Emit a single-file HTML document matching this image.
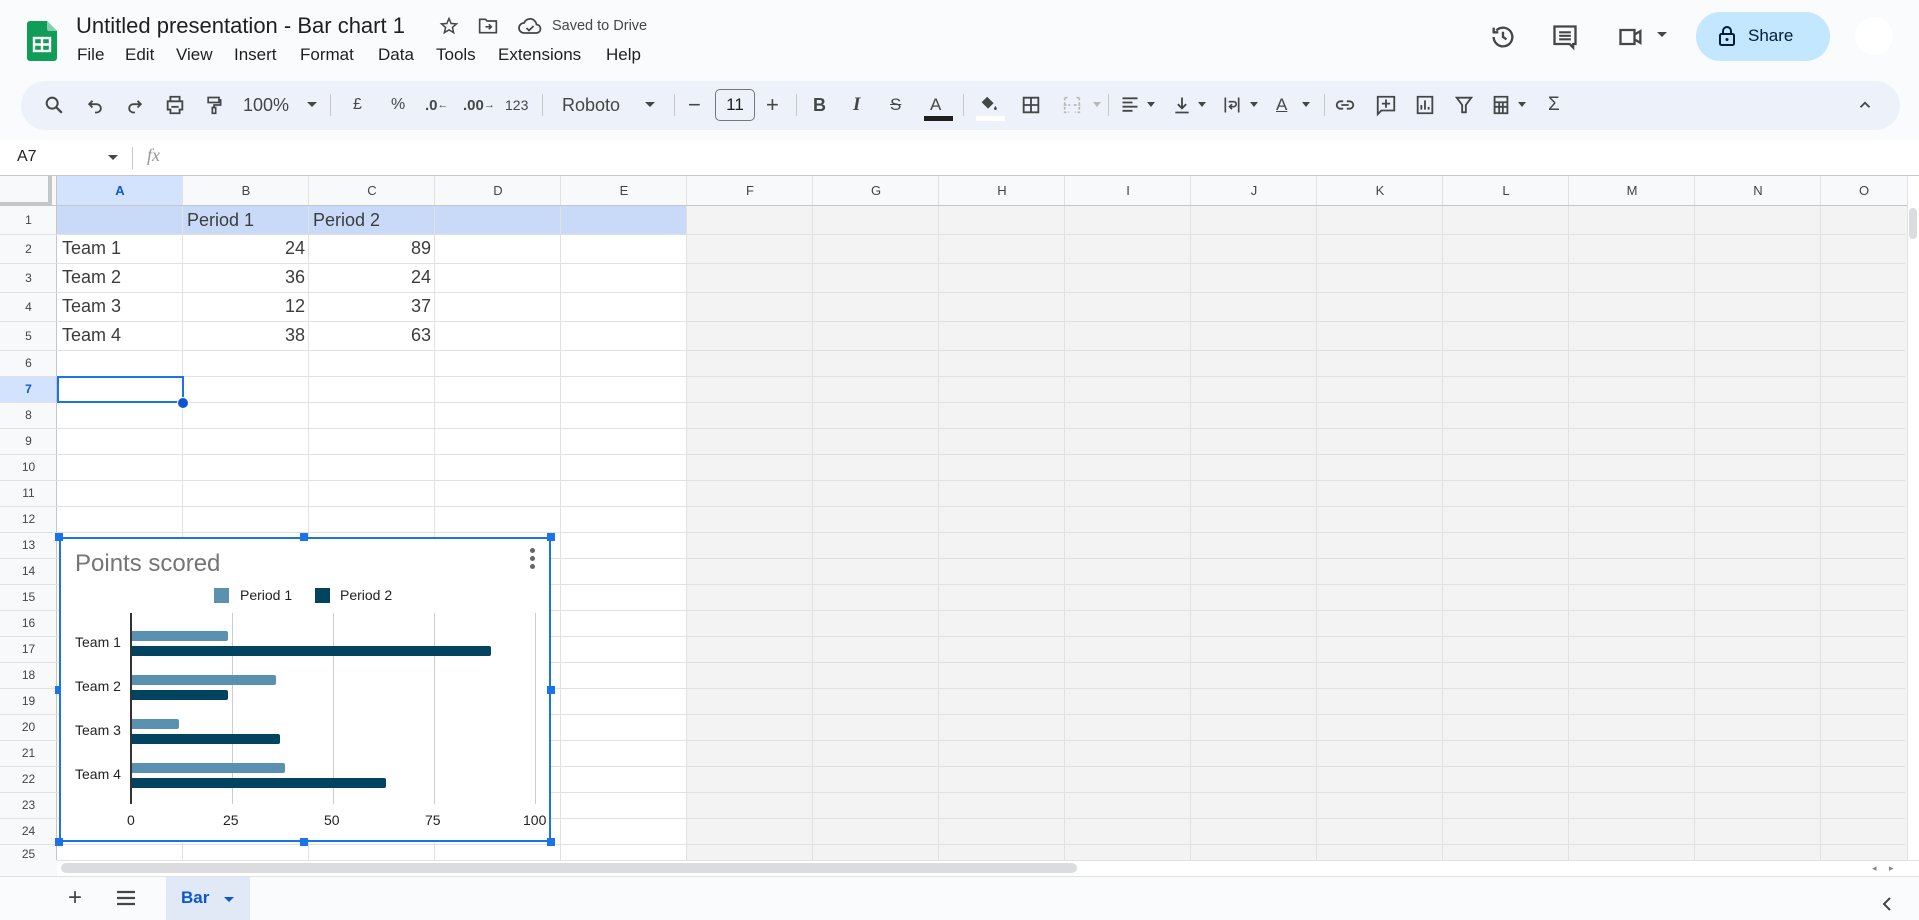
<!DOCTYPE html>
<html><head><meta charset="utf-8"><style>
*{box-sizing:border-box;margin:0;padding:0}
body{width:1919px;height:920px;overflow:hidden;background:#f9fbfd;font-family:"Liberation Sans",Arial,sans-serif;position:relative;color:#1f1f1f}
.a{position:absolute}
.menu span{position:absolute;top:45px;font-size:17px;color:#1f1f1f}
.tb{position:absolute;top:93px;height:24px;display:flex;align-items:center;justify-content:center;color:#444746;font-size:16px}
.sep{position:absolute;top:94px;width:1px;height:22px;background:#c7c7c7}
.ch{position:absolute;top:176px;height:30px;line-height:30px;text-align:center;font-size:13px;color:#444;width:126px}
.rh{position:absolute;left:0;width:57px;text-align:center;font-size:12px;color:#444;display:flex;align-items:center;justify-content:center}
.hl{position:absolute;left:0;width:1905px;height:1px;background:#e1e1e1}
.cell{position:absolute;font-size:18px;color:#3c3c3c;display:flex;align-items:center}
.num{justify-content:flex-end;width:126px;padding-right:4px}
.h{position:absolute;width:8px;height:8px;background:#1a73e8}
.bar{position:absolute;height:10px;border-radius:0 2px 2px 0}
.p1{background:#5b91b0}.p2{background:#024460}
.lab{position:absolute;font-size:14px;color:#222}
</style></head><body>

<!-- logo -->
<svg class="a" style="left:27px;top:21px" width="30" height="40" viewBox="0 0 30 40"><path d="M3 0h17l10 10v27a3 3 0 0 1-3 3H3a3 3 0 0 1-3-3V3a3 3 0 0 1 3-3z" fill="#0f9d58"/><path d="M20 0l10 10H22a2 2 0 0 1-2-2z" fill="#87ceac"/><rect x="7" y="17" width="16" height="13" fill="none" stroke="#fff" stroke-width="2.4"/><path d="M7 23.5h16M15 17v13" stroke="#fff" stroke-width="2.4"/></svg>
<div class="a" style="left:76px;top:13px;font-size:22px;color:#1f1f1f">Untitled presentation - Bar chart 1</div>
<svg class="a" style="left:439px;top:16px" width="20" height="20" viewBox="0 0 24 24"><path d="M12 3l2.6 6 6.4.5-4.9 4.2 1.5 6.3L12 16.6 6.4 20l1.5-6.3L3 9.5 9.4 9z" fill="none" stroke="#444746" stroke-width="1.8"/></svg>
<svg class="a" style="left:478px;top:17px" width="20" height="18" viewBox="0 0 24 20"><path d="M2 2h7l2 2h11v14H2z" fill="none" stroke="#444746" stroke-width="2"/><path d="M9 11h7M13 8l3 3-3 3" fill="none" stroke="#444746" stroke-width="2"/></svg>
<svg class="a" style="left:518px;top:17px" width="24" height="18" viewBox="0 0 24 18"><path d="M6 16a5 5 0 0 1 0-10 6.5 6.5 0 0 1 12.5 1.5A4 4 0 0 1 18 16z" fill="none" stroke="#444746" stroke-width="1.8"/><path d="M8.5 11l2.5 2.5 4.5-4.5" fill="none" stroke="#444746" stroke-width="1.8"/></svg>
<div class="a" style="left:552px;top:18px;font-size:14.5px;color:#444746">Saved to Drive</div>
<div class="menu"><span style="left:77px">File</span><span style="left:125px">Edit</span><span style="left:176px">View</span><span style="left:234px">Insert</span><span style="left:300px">Format</span><span style="left:378px">Data</span><span style="left:436px">Tools</span><span style="left:498px">Extensions</span><span style="left:606px">Help</span></div>

<!-- right header -->
<svg class="a" style="left:1489px;top:23px" width="28" height="28" viewBox="0 0 24 24"><path d="M4 12a8 8 0 1 0 2.3-5.6M4 4v4h4" fill="none" stroke="#444746" stroke-width="2"/><path d="M12 7.5V12l3 2" fill="none" stroke="#444746" stroke-width="2"/></svg>
<svg class="a" style="left:1551px;top:23px" width="28" height="28" viewBox="0 0 24 24"><path d="M3 3h18v15h-2v3l-3-3H3z" fill="none" stroke="#444746" stroke-width="2"/><path d="M7 8h10M7 11h10M7 14h10" stroke="#444746" stroke-width="1.8"/></svg>
<svg class="a" style="left:1617px;top:25px" width="28" height="24" viewBox="0 0 24 20"><path d="M3 4h12v12H3zM15 8l5-3v10l-5-3" fill="none" stroke="#444746" stroke-width="2"/></svg>
<div class="a" style="left:1657px;top:32px;border-left:5px solid transparent;border-right:5px solid transparent;border-top:5px solid #444746"></div>
<div class="a" style="left:1696px;top:12px;width:134px;height:49px;border-radius:25px;background:#c2e7ff"></div>
<svg class="a" style="left:1718px;top:25px" width="18" height="22" viewBox="0 0 18 22"><rect x="2" y="9" width="14" height="11" rx="1.5" fill="none" stroke="#001d35" stroke-width="2"/><path d="M5 9V6a4 4 0 0 1 8 0v3" fill="none" stroke="#001d35" stroke-width="2"/><circle cx="9" cy="14.5" r="1.5" fill="#001d35"/></svg>
<div class="a" style="left:1748px;top:26px;font-size:17px;color:#001d35;font-weight:500">Share</div>
<div class="a" style="left:1855px;top:17px;width:38px;height:38px;border-radius:50%;background:#fff"></div>

<!-- toolbar -->
<div class="a" style="left:21px;top:81px;width:1879px;height:49px;border-radius:25px;background:#edf2fa"></div>
<svg class="tb" style="left:43px;width:22px" viewBox="0 0 24 24"><circle cx="10" cy="10" r="6" fill="none" stroke="#444746" stroke-width="2.2"/><path d="M14.5 14.5l6 6" stroke="#444746" stroke-width="2.4"/></svg>
<svg class="tb" style="left:85px;width:20px" viewBox="0 0 24 24"><path d="M9 7L5 11l4 4M5 11h9a5 5 0 0 1 0 10h-2" fill="none" stroke="#444746" stroke-width="2.2"/></svg>
<svg class="tb" style="left:125px;width:20px" viewBox="0 0 24 24"><path d="M15 7l4 4-4 4M19 11h-9a5 5 0 0 0 0 10h2" fill="none" stroke="#444746" stroke-width="2.2"/></svg>
<svg class="tb" style="left:164px;width:22px" viewBox="0 0 24 24"><path d="M7 8V3h10v5M4 8h16v9h-3v4H7v-4H4z" fill="none" stroke="#444746" stroke-width="2"/><path d="M8 14h8" stroke="#444746" stroke-width="2"/></svg>
<svg class="tb" style="left:204px;width:20px" viewBox="0 0 24 24"><path d="M5 3h13v6H5zM18 6h2v6h-8v3M10 15h4v7h-4z" fill="none" stroke="#444746" stroke-width="2"/></svg>
<div class="tb" style="left:243px;font-size:18px">100%</div>
<div class="a" style="left:307px;top:102px;border-left:5px solid transparent;border-right:5px solid transparent;border-top:5px solid #444746"></div>
<div class="sep" style="left:330px"></div>
<div class="tb" style="left:353px;font-size:16px">£</div>
<div class="tb" style="left:391px;font-size:16px">%</div>
<div class="tb" style="left:425px;font-size:15px;font-weight:bold">.0<span style="font-size:11px;font-weight:normal">←</span></div>
<div class="tb" style="left:463px;font-size:15px;font-weight:bold">.00<span style="font-size:11px;font-weight:normal">→</span></div>
<div class="tb" style="left:505px;font-size:14px">123</div>
<div class="sep" style="left:542px"></div>
<div class="tb" style="left:562px;font-size:18px">Roboto</div>
<div class="a" style="left:645px;top:102px;border-left:5px solid transparent;border-right:5px solid transparent;border-top:5px solid #444746"></div>
<div class="sep" style="left:674px"></div>
<div class="tb" style="left:688px;font-size:22px">−</div>
<div class="a" style="left:715px;top:89px;width:40px;height:32px;border:1.5px solid #747775;border-radius:5px;text-align:center;line-height:29px;font-size:17px;color:#1f1f1f">11</div>
<div class="tb" style="left:766px;font-size:22px">+</div>
<div class="sep" style="left:796px"></div>
<div class="tb" style="left:813px;font-size:18px;font-weight:bold">B</div>
<div class="tb" style="left:853px;font-size:19px;font-style:italic;font-weight:bold;font-family:'Liberation Serif',serif">I</div>
<div class="tb" style="left:890px;font-size:17px;text-decoration:line-through">S</div>
<div class="tb" style="left:930px;font-size:17px">A</div>
<div class="a" style="left:924px;top:116px;width:29px;height:5px;background:#1f1f1f"></div>
<div class="sep" style="left:963px"></div>
<svg class="tb" style="left:978px;width:22px" viewBox="0 0 24 24"><path d="M10 3l7 7-6 6-7-7z" fill="#444746"/><path d="M19 13c1 1.5 1.5 2.5 1.5 3a1.5 1.5 0 0 1-3 0c0-.5.5-1.5 1.5-3z" fill="#444746"/></svg>
<div class="a" style="left:976px;top:116px;width:29px;height:5px;background:#fff"></div>
<svg class="tb" style="left:1020px;width:22px" viewBox="0 0 24 24"><path d="M4 4h16v16H4zM12 4v16M4 12h16" fill="none" stroke="#444746" stroke-width="2"/></svg>
<svg class="tb" style="left:1061px;width:22px" viewBox="0 0 24 24"><path d="M4 4h5M4 4v16h5M20 4h-5M20 4v16h-5M3 12h7M14 12h7" fill="none" stroke="#b8b8b8" stroke-width="1.8" stroke-dasharray="3 2"/></svg>
<div class="a" style="left:1093px;top:102px;border-left:4px solid transparent;border-right:4px solid transparent;border-top:5px solid #b8b8b8"></div>
<div class="sep" style="left:1108px"></div>
<svg class="tb" style="left:1120px;width:20px" viewBox="0 0 24 24"><path d="M3 4h18M3 9h12M3 14h18M3 19h12" stroke="#444746" stroke-width="2.2"/></svg>
<div class="a" style="left:1147px;top:102px;border-left:4px solid transparent;border-right:4px solid transparent;border-top:5px solid #444746"></div>
<svg class="tb" style="left:1172px;width:20px" viewBox="0 0 24 24"><path d="M12 3v13M7 11l5 5 5-5M4 21h16" fill="none" stroke="#444746" stroke-width="2.2"/></svg>
<div class="a" style="left:1198px;top:102px;border-left:4px solid transparent;border-right:4px solid transparent;border-top:5px solid #444746"></div>
<svg class="tb" style="left:1222px;width:20px" viewBox="0 0 24 24"><path d="M4 3v18M20 3v18M8 8h6a3 3 0 0 1 0 6h-4M12 11l-3 3 3 3" fill="none" stroke="#444746" stroke-width="2"/></svg>
<div class="a" style="left:1250px;top:102px;border-left:4px solid transparent;border-right:4px solid transparent;border-top:5px solid #444746"></div>
<div class="tb" style="left:1276px;font-size:17px;text-decoration:underline">A</div>
<div class="a" style="left:1302px;top:102px;border-left:4px solid transparent;border-right:4px solid transparent;border-top:5px solid #444746"></div>
<div class="sep" style="left:1324px"></div>
<svg class="tb" style="left:1334px;width:22px" viewBox="0 0 24 24"><path d="M10 8H7a4 4 0 0 0 0 8h3M14 8h3a4 4 0 0 1 0 8h-3M8 12h8" fill="none" stroke="#444746" stroke-width="2"/></svg>
<svg class="tb" style="left:1375px;width:22px" viewBox="0 0 24 24"><path d="M3 3h18v15H7l-4 4z" fill="none" stroke="#444746" stroke-width="2"/><path d="M12 6v9M7.5 10.5h9" stroke="#444746" stroke-width="2"/></svg>
<svg class="tb" style="left:1414px;width:22px" viewBox="0 0 24 24"><path d="M4 3h16v18H4z" fill="none" stroke="#444746" stroke-width="2"/><path d="M8 17v-5M12 17V7M16 17v-3" stroke="#444746" stroke-width="2"/></svg>
<svg class="tb" style="left:1453px;width:22px" viewBox="0 0 24 24"><path d="M4 4h16l-6 8v8h-4v-8z" fill="none" stroke="#444746" stroke-width="2"/></svg>
<svg class="tb" style="left:1490px;width:22px" viewBox="0 0 24 24"><path d="M5 3h14v18H5zM5 9h14M5 14h14M10 9v12M14 9v12" fill="none" stroke="#444746" stroke-width="2"/></svg>
<div class="a" style="left:1518px;top:102px;border-left:4px solid transparent;border-right:4px solid transparent;border-top:5px solid #444746"></div>
<div class="tb" style="left:1548px;font-size:19px">Σ</div>
<svg class="tb" style="left:1856px;width:18px" viewBox="0 0 24 24"><path d="M6 15l6-6 6 6" fill="none" stroke="#444746" stroke-width="2.4"/></svg>

<!-- formula bar -->
<div class="a" style="left:0;top:140px;width:1919px;height:36px;background:#fff;border-bottom:1px solid #c7c7c7"></div>
<div class="a" style="left:17px;top:148px;font-size:16px;color:#1f1f1f">A7</div>
<div class="a" style="left:108px;top:155px;border-left:5px solid transparent;border-right:5px solid transparent;border-top:5px solid #444746"></div>
<div class="a" style="left:132px;top:147px;width:1px;height:22px;background:#c7c7c7"></div>
<div class="a" style="left:147px;top:145px;font-size:18px;color:#999;font-style:italic;font-family:'Liberation Serif',serif">fx</div>

<!-- grid bg -->
<div class="a" style="left:57px;top:206px;width:630px;height:654px;background:#fff"></div>
<div class="a" style="left:687px;top:206px;width:1220px;height:654px;background:#f3f3f3"></div>
<div class="a" style="left:57px;top:206px;width:630px;height:28px;background:#c9daf8"></div>
<div class="a" style="left:0;top:176px;width:1907px;height:30px;background:#f8f9fa"></div>
<div class="a" style="left:0;top:206px;width:57px;height:654px;background:#f8f9fa"></div>
<div class="a" style="left:57px;top:176px;width:126px;height:30px;background:#d3e3fd"></div>
<div class="a" style="left:0;top:376px;width:57px;height:26px;background:#d3e3fd"></div>
<!-- vertical lines -->
<div class="a" style="left:57px;top:176px;width:1850px;height:684px;background:repeating-linear-gradient(to right,transparent 0,transparent 125px,#e1e1e1 125px,#e1e1e1 126px)"></div>
<div class="a" style="left:0;top:176px;width:52px;height:30px;border-right:4px solid #c4c7c5;border-bottom:4px solid #c4c7c5;background:#f8f9fa"></div>
<div class="a" style="left:56px;top:176px;width:1px;height:684px;background:#c4c7c5"></div>
<div class="a" style="left:0;top:205px;width:1907px;height:1px;background:#c4c7c5"></div>
<!-- horizontal lines -->
<div class="hl" style="top:234px"></div><div class="hl" style="top:263px"></div><div class="hl" style="top:292px"></div><div class="hl" style="top:321px"></div><div class="hl" style="top:350px"></div><div class="hl" style="top:376px"></div><div class="hl" style="top:402px"></div><div class="hl" style="top:428px"></div><div class="hl" style="top:454px"></div><div class="hl" style="top:480px"></div><div class="hl" style="top:506px"></div><div class="hl" style="top:532px"></div><div class="hl" style="top:558px"></div><div class="hl" style="top:584px"></div><div class="hl" style="top:610px"></div><div class="hl" style="top:636px"></div><div class="hl" style="top:662px"></div><div class="hl" style="top:688px"></div><div class="hl" style="top:714px"></div><div class="hl" style="top:740px"></div><div class="hl" style="top:766px"></div><div class="hl" style="top:792px"></div><div class="hl" style="top:818px"></div><div class="hl" style="top:844px"></div>

<!-- column headers -->
<div class="ch" style="left:57px;font-weight:bold;color:#0b57d0">A</div><div class="ch" style="left:183px">B</div><div class="ch" style="left:309px">C</div><div class="ch" style="left:435px">D</div><div class="ch" style="left:561px">E</div><div class="ch" style="left:687px">F</div><div class="ch" style="left:813px">G</div><div class="ch" style="left:939px">H</div><div class="ch" style="left:1065px">I</div><div class="ch" style="left:1191px">J</div><div class="ch" style="left:1317px">K</div><div class="ch" style="left:1443px">L</div><div class="ch" style="left:1569px">M</div><div class="ch" style="left:1695px">N</div><div class="ch" style="left:1821px;width:86px">O</div>

<!-- row headers -->
<div class="rh" style="top:206px;height:28px">1</div><div class="rh" style="top:234px;height:29px">2</div><div class="rh" style="top:263px;height:29px">3</div><div class="rh" style="top:292px;height:29px">4</div><div class="rh" style="top:321px;height:29px">5</div><div class="rh" style="top:350px;height:26px">6</div><div class="rh" style="top:376px;height:26px;font-weight:bold;color:#0b57d0">7</div><div class="rh" style="top:402px;height:26px">8</div><div class="rh" style="top:428px;height:26px">9</div><div class="rh" style="top:454px;height:26px">10</div><div class="rh" style="top:480px;height:26px">11</div><div class="rh" style="top:506px;height:26px">12</div><div class="rh" style="top:532px;height:26px">13</div><div class="rh" style="top:558px;height:26px">14</div><div class="rh" style="top:584px;height:26px">15</div><div class="rh" style="top:610px;height:26px">16</div><div class="rh" style="top:636px;height:26px">17</div><div class="rh" style="top:662px;height:26px">18</div><div class="rh" style="top:688px;height:26px">19</div><div class="rh" style="top:714px;height:26px">20</div><div class="rh" style="top:740px;height:26px">21</div><div class="rh" style="top:766px;height:26px">22</div><div class="rh" style="top:792px;height:26px">23</div><div class="rh" style="top:818px;height:26px">24</div><div class="rh" style="top:844px;height:16px;overflow:hidden;align-items:flex-start;padding-top:3px">25</div>

<!-- cells -->
<div class="cell" style="left:187px;top:206px;height:28px">Period 1</div>
<div class="cell" style="left:313px;top:206px;height:28px">Period 2</div>
<div class="cell" style="left:62px;top:234px;height:29px">Team 1</div>
<div class="cell" style="left:62px;top:263px;height:29px">Team 2</div>
<div class="cell" style="left:62px;top:292px;height:29px">Team 3</div>
<div class="cell" style="left:62px;top:321px;height:29px">Team 4</div>
<div class="cell num" style="left:183px;top:234px;height:29px">24</div><div class="cell num" style="left:309px;top:234px;height:29px">89</div>
<div class="cell num" style="left:183px;top:263px;height:29px">36</div><div class="cell num" style="left:309px;top:263px;height:29px">24</div>
<div class="cell num" style="left:183px;top:292px;height:29px">12</div><div class="cell num" style="left:309px;top:292px;height:29px">37</div>
<div class="cell num" style="left:183px;top:321px;height:29px">38</div><div class="cell num" style="left:309px;top:321px;height:29px">63</div>

<!-- selection -->
<div class="a" style="left:57px;top:376px;width:127px;height:27px;border:2px solid #1a73e8"></div>
<div class="a" style="left:177px;top:397px;width:12px;height:12px;border-radius:50%;background:#0b57d0;border:1.5px solid #fff"></div>

<!-- chart -->
<div class="a" style="left:59px;top:537px;width:492px;height:305px;background:#fff;border:2px solid #1a73e8"></div>
<div class="a" style="left:75px;top:550px;font-size:24px;color:#757575">Points scored</div>
<div class="a" style="left:530px;top:548px;width:5px;height:5px;border-radius:50%;background:#666"></div>
<div class="a" style="left:530px;top:556px;width:5px;height:5px;border-radius:50%;background:#666"></div>
<div class="a" style="left:530px;top:564px;width:5px;height:5px;border-radius:50%;background:#666"></div>
<div class="a p1" style="left:214px;top:588px;width:15px;height:15px"></div>
<div class="lab" style="left:240px;top:587px">Period 1</div>
<div class="a p2" style="left:315px;top:588px;width:15px;height:15px"></div>
<div class="lab" style="left:340px;top:587px">Period 2</div>
<div class="a" style="left:232px;top:613px;width:1px;height:191px;background:#ccc"></div>
<div class="a" style="left:333px;top:613px;width:1px;height:191px;background:#ccc"></div>
<div class="a" style="left:434px;top:613px;width:1px;height:191px;background:#ccc"></div>
<div class="a" style="left:535px;top:613px;width:1px;height:191px;background:#ccc"></div>
<div class="a" style="left:130px;top:613px;width:2px;height:191px;background:#333"></div>
<div class="bar p1" style="left:132px;top:631px;width:96px"></div><div class="bar p2" style="left:132px;top:646px;width:359px"></div>
<div class="bar p1" style="left:132px;top:675px;width:144px"></div><div class="bar p2" style="left:132px;top:690px;width:96px"></div>
<div class="bar p1" style="left:132px;top:719px;width:47px"></div><div class="bar p2" style="left:132px;top:734px;width:148px"></div>
<div class="bar p1" style="left:132px;top:763px;width:153px"></div><div class="bar p2" style="left:132px;top:778px;width:254px"></div>
<div class="lab" style="left:75px;top:634px">Team 1</div>
<div class="lab" style="left:75px;top:678px">Team 2</div>
<div class="lab" style="left:75px;top:722px">Team 3</div>
<div class="lab" style="left:75px;top:766px">Team 4</div>
<div class="lab" style="left:127px;top:812px">0</div>
<div class="lab" style="left:223px;top:812px">25</div>
<div class="lab" style="left:324px;top:812px">50</div>
<div class="lab" style="left:425px;top:812px">75</div>
<div class="lab" style="left:523px;top:812px">100</div>
<div class="h" style="left:55px;top:533px"></div><div class="h" style="left:300px;top:533px"></div><div class="h" style="left:547px;top:533px"></div>
<div class="h" style="left:55px;top:686px;width:5px"></div><div class="h" style="left:547px;top:686px"></div>
<div class="h" style="left:55px;top:838px"></div><div class="h" style="left:300px;top:838px"></div><div class="h" style="left:547px;top:838px"></div>

<!-- vertical scrollbar -->
<div class="a" style="left:1907px;top:176px;width:12px;height:700px;background:#fff;border-left:1px solid #e1e1e1"></div>
<div class="a" style="left:1909px;top:208px;width:8px;height:31px;border-radius:4px;background:#dadce0"></div>
<!-- horizontal scrollbar -->
<div class="a" style="left:0;top:860px;width:1919px;height:16px;background:#fff;border-top:1px solid #e1e1e1"></div>
<div class="a" style="left:0;top:860px;width:57px;height:16px;background:#f8f9fa"></div>
<div class="a" style="left:61px;top:863px;width:1016px;height:10px;border-radius:5px;background:#dadce0"></div>
<div class="a" style="left:1872px;top:863px;font-size:9px;color:#888">◂</div>
<div class="a" style="left:1889px;top:863px;font-size:9px;color:#888">▸</div>

<!-- bottom bar -->
<div class="a" style="left:0;top:876px;width:1919px;height:44px;background:#f9fbfd;border-top:1px solid #e1e1e1"></div>
<div class="a" style="left:68px;top:884px;font-size:24px;color:#444746">+</div>
<svg class="a" style="left:115px;top:890px" width="22" height="16" viewBox="0 0 22 16"><path d="M2 2h18M2 8h18M2 14h18" stroke="#444746" stroke-width="2.2"/></svg>
<div class="a" style="left:166px;top:877px;width:84px;height:43px;background:#e1e9f7"></div>
<div class="a" style="left:181px;top:888px;font-size:17px;color:#0b57d0;font-weight:bold">Bar</div>
<div class="a" style="left:224px;top:897px;border-left:5px solid transparent;border-right:5px solid transparent;border-top:5px solid #0b57d0"></div>
<svg class="a" style="left:1880px;top:896px" width="14" height="16" viewBox="0 0 14 16"><path d="M10 2L4 8l6 6" fill="none" stroke="#444746" stroke-width="2"/></svg>
</body></html>
